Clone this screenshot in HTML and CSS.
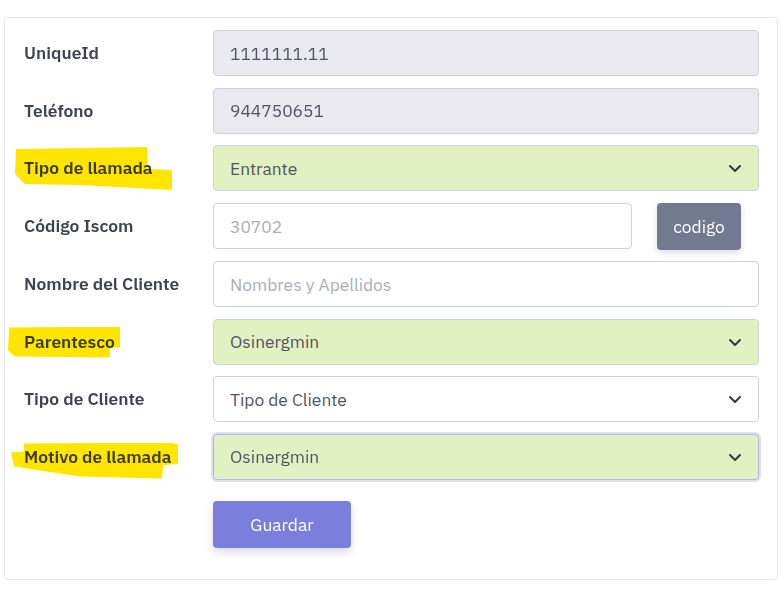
FILE: index.html
```html
<!DOCTYPE html>
<html lang="es">
<head>
<meta charset="utf-8">
<link rel="stylesheet" href="styles.css">
</head>
<body>
<div class="card">
  <form class="form">
    <label class="lbl">UniqueId</label>
    <div class="field"><div class="ctl ro">1111111.11</div></div>

    <label class="lbl">Teléfono</label>
    <div class="field"><div class="ctl ro">944750651</div></div>

    <label class="lbl"><span class="txt">Tipo de llamada</span><span class="mark m1"></span></label>
    <div class="field"><div class="ctl sel green">Entrante<svg class="chev" viewBox="0 0 16 16"><path d="M3 6l5 5 5-5"/></svg></div></div>

    <label class="lbl">Código Iscom</label>
    <div class="field code-row">
      <div class="ctl ph code-input">30702</div>
      <button type="button" class="btn-code">codigo</button>
    </div>

    <label class="lbl">Nombre del Cliente</label>
    <div class="field"><div class="ctl ph">Nombres y Apellidos</div></div>

    <label class="lbl"><span class="txt">Parentesco</span><span class="mark m2"></span></label>
    <div class="field"><div class="ctl sel green">Osinergmin<svg class="chev" viewBox="0 0 16 16"><path d="M3 6l5 5 5-5"/></svg></div></div>

    <label class="lbl">Tipo de Cliente</label>
    <div class="field"><div class="ctl sel">Tipo de Cliente<svg class="chev" viewBox="0 0 16 16"><path d="M3 6l5 5 5-5"/></svg></div></div>

    <label class="lbl"><span class="txt">Motivo de llamada</span><span class="mark m3"></span></label>
    <div class="field"><div class="ctl sel green focus">Osinergmin<svg class="chev" viewBox="0 0 16 16"><path d="M3 6l5 5 5-5"/></svg></div></div>

    <div></div>
    <div class="actions"><button type="button" class="btn-save">Guardar</button></div>
  </form>
</div>
</body>
</html>
```
FILE: styles.css
```css
* { box-sizing: border-box; }
html, body { margin: 0; background: #fff; }
body {
  font-family: "IBM Plex Sans", Roboto, "Noto Sans", sans-serif;
  font-size: 17.4px;
  color: #525f7f;
  padding: 17px 4px 10px 4px;
}
.card {
  width: 774px;
  border: 1px solid #e6e7ea;
  border-radius: 4px;
  padding: 12px 18px 31px 19px;
}
.form {
  display: grid;
  grid-template-columns: 189px 1fr;
  row-gap: 11.5px;
  align-items: center;
}
.lbl {
  position: relative;
  display: block;
  height: 22px;
  line-height: 22px;
  font-weight: 600;
  color: #3d4451;
  font-size: 17.4px;
}
.lbl .txt { position: relative; }
.mark {
  position: absolute;
  background: #ffe500;
  mix-blend-mode: multiply;
}
.m1 { left: -9px; top: -10px; width: 158px; height: 43px;
  clip-path: polygon(1px 2px, 132px 0, 133px 22px, 157px 23px, 157px 43px, 65px 38px, 10px 37px, 0 27px); }
.m2 { left: -16px; top: -4px; width: 113px; height: 31px;
  clip-path: polygon(1px 1px, 112px 0, 112px 21px, 102px 21px, 102px 31px, 7px 30px, 0 24px); }
.m3 { left: -13px; top: -3px; width: 168px; height: 37px;
  clip-path: polygon(13px 1px, 159px 0, 167px 2px, 167px 21px, 152px 23px, 151px 36px, 69px 34px, 3px 24px, 0 10px, 13px 9px); }
.field { min-width: 0; }
.ctl {
  height: 46px;
  border: 1px solid #cdd1d9;
  border-radius: 4px;
  background: #fff;
  display: flex;
  align-items: center;
  padding: 0 16px;
  color: #4f5464;
  font-size: 17.4px;
  position: relative;
}
.ro { background: #e9e9ef; }
.green { background: #e1f1c2; }
.ph { color: #a9b0bd; }
.sel { justify-content: space-between; }
.chev { width: 16px; height: 16px; margin-right: -1px; }
.chev path { fill: none; stroke: #343a40; stroke-width: 2; stroke-linecap: round; stroke-linejoin: round; }
.focus {
  border-color: #b4b6dd;
  box-shadow: 0 0 0 2px #dfe0f7;
}
.code-row {
  display: flex;
  align-items: center;
  gap: 25px;
}
.code-input { width: 419px; }
.btn-code {
  width: 84px;
  height: 47px;
  border: none;
  border-radius: 4px;
  background: #737990;
  color: #fff;
  font-family: inherit;
  font-size: 17.4px;
  box-shadow: 0 3px 6px rgba(50,50,93,.15);
}
.actions { padding-top: 9.5px; }
.btn-save {
  width: 138px;
  height: 47px;
  border: none;
  border-radius: 4px;
  background: #7a7fde;
  color: #fff;
  font-family: inherit;
  font-size: 17.4px;
  font-weight: 400;
  box-shadow: 0 4px 8px rgba(50,50,93,.18);
}
```
